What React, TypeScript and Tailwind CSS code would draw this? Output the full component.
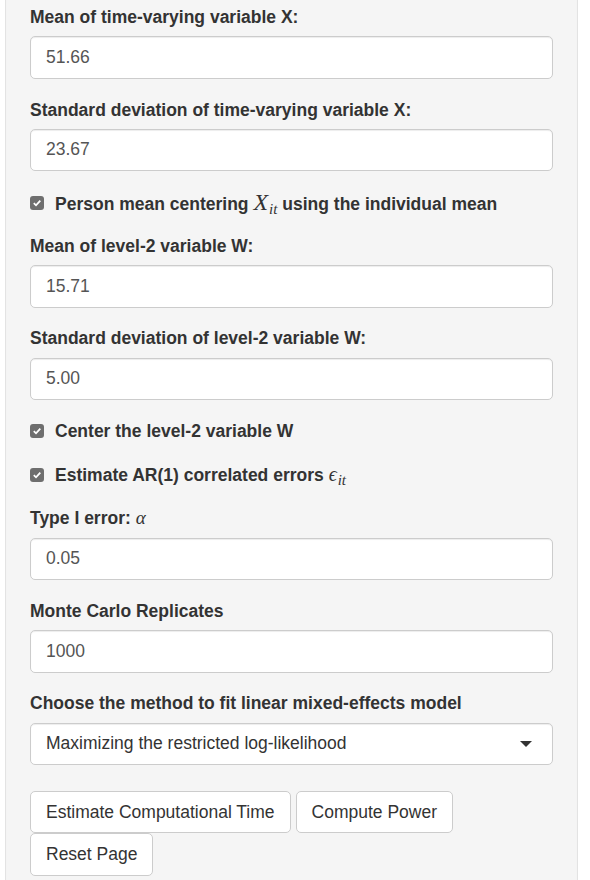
const labelCls = 'block font-bold mb-[6.25px] leading-[25px] h-[25px]';
const inputCls =
  'block w-full h-[42.5px] px-[15px] py-[7.5px] bg-white border border-[#ccc] rounded-[5px] shadow-[inset_0_1px_1px_rgba(0,0,0,0.075)] text-[#555] leading-[25px]';
const btnCls =
  'inline-block h-[42.5px] px-[15px] bg-white border border-[#ccc] rounded-[5px] text-[#333] leading-[25px] whitespace-nowrap';

const CheckBox = () => (
  <span className="absolute left-0 top-[5.5px] w-[14px] h-[14px] rounded-[3px] bg-[#6e6e6e] flex items-center justify-center">
    <svg width="10" height="10" viewBox="0 0 10 10">
      <path d="M1.8 5.2 L4 7.3 L8.3 2.6" fill="none" stroke="#fff" strokeWidth="1.8" />
    </svg>
  </span>
);

const Sub = ({ base, sub, big }: { base: string; sub: string; big?: boolean }) => (
  <span className="font-normal leading-none" style={{ fontFamily: '"Liberation Serif", "DejaVu Serif", serif' }}>
    <i className={big ? 'text-[24px] leading-none' : 'text-[20px] leading-none'}>{base}</i>
    <i className="text-[15px] leading-none relative top-[4px] ml-[1px]">{sub}</i>
  </span>
);

const TextField = ({ label, value }: { label: React.ReactNode; value: string }) => (
  <div className="mb-[18.75px]">
    <label className={labelCls}>{label}</label>
    <div className={inputCls}>{value}</div>
  </div>
);

const Check = ({ children }: { children: React.ReactNode }) => (
  <div className="mb-[18.75px]">
    <label className="relative block pl-[25px] font-bold leading-[25px] h-[25px]">
      <CheckBox />
      {children}
    </label>
  </div>
);

export default function App() {
  return (
    <div
      className="bg-white w-[590px] h-[880px] overflow-hidden text-[17.5px] text-[#333]"
      style={{ fontFamily: '"Liberation Sans", Arial, sans-serif' }}
    >
      <div className="ml-[5px] w-[573px] -mt-[20px] bg-[#f5f5f5] border border-[#e3e3e3] rounded-[5px] shadow-[inset_0_1px_1px_rgba(0,0,0,0.05)] px-[24px] pt-[24px] pb-[24px]">
        <TextField label="Mean of time-varying variable X:" value="51.66" />
        <TextField label="Standard deviation of time-varying variable X:" value="23.67" />
        <Check>
          Person mean centering <Sub base="X" sub="it" big /> using the individual mean
        </Check>
        <TextField label="Mean of level-2 variable W:" value="15.71" />
        <TextField label="Standard deviation of level-2 variable W:" value="5.00" />
        <Check>Center the level-2 variable W</Check>
        <Check>
          Estimate AR(1) correlated errors <Sub base={'\u03F5'} sub="it" />
        </Check>
        <TextField
          label={
            <>
              Type I error:{' '}
              <i className="font-normal text-[19px] leading-none" style={{ fontFamily: '"Liberation Serif", serif' }}>
                α
              </i>
            </>
          }
          value="0.05"
        />
        <TextField label="Monte Carlo Replicates" value="1000" />
        <div className="mb-[18.75px]">
          <label className={labelCls}>Choose the method to fit linear mixed-effects model</label>
          <div className={inputCls + ' flex items-center justify-between !text-[#333]'}>
            <span>Maximizing the restricted log-likelihood</span>
            <span className="mr-[5px] w-0 h-0 border-x-[6px] border-x-transparent border-t-[6px] border-t-[#333]" />
          </div>
        </div>
        <div className="pt-[7px]">
          <div className="flex gap-[5px]">
            <button className={btnCls}>Estimate Computational Time</button>
            <button className={btnCls}>Compute Power</button>
          </div>
          <div className="flex">
            <button className={btnCls}>Reset Page</button>
          </div>
        </div>
      </div>
    </div>
  );
}
